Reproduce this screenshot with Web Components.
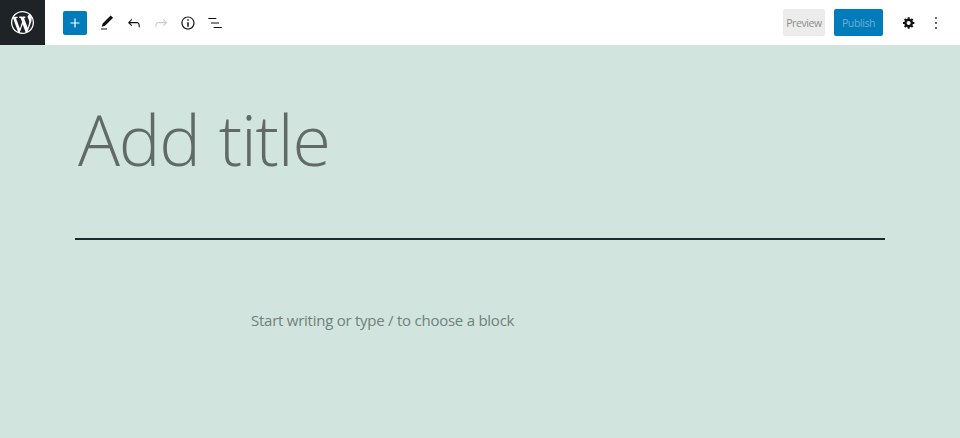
<!DOCTYPE html>
<html lang="en">
<head>
<meta charset="utf-8">
<title>Add title</title>
<style>
  html, body { margin: 0; height: 100%; background: #d1e5de; overflow: hidden; }
  body { font-family: "Open Sans", "Noto Sans", sans-serif; }
</style>
</head>
<body>
<wp-editor>
  <wp-topbar slot="bar"></wp-topbar>
  <wp-canvas title-text="Add title" placeholder="Start writing or type / to choose a block"></wp-canvas>
</wp-editor>

<script>
const ICONS = {
  plus: `<path d="M18 11.2h-5.2V6h-1.6v5.2H6v1.6h5.2V18h1.6v-5.2H18z"/>`,
  tools: `<path d="M20.1 5.1L16.9 2 6.2 12.7l-1.3 4.4 4.5-1.3L20.1 5.1zM4 20.8h8v-1.5H4v1.5z"/>`,
  undo: `<path d="M18.3 11.7c-.6-.6-1.4-.9-2.3-.9H6.7l2.9-3.3-1.1-1-4.5 5L8.5 16l1-1-2.7-2.7H16c.5 0 .9.2 1.3.5 1 1 1 3.4 1 4.5v.3h1.5v-.2c0-1.5 0-4.3-1.5-5.7z"/>`,
  redo: `<path d="M15.6 6.5l-1.1 1 2.9 3.3H8c-.9 0-1.7.3-2.3.9-1.4 1.5-1.4 4.2-1.4 5.6v.2h1.5v-.3c0-1.1 0-3.5 1-4.5.3-.3.7-.5 1.3-.5h9.2L14.5 15l1.1 1.1 4.6-4.6-4.6-5z"/>`,
  info: `<path d="M12 3.2c-4.8 0-8.8 3.9-8.8 8.8 0 4.8 3.9 8.8 8.8 8.8 4.8 0 8.8-3.9 8.8-8.8 0-4.8-4-8.8-8.8-8.8zm0 16c-4 0-7.2-3.3-7.2-7.2C4.8 8 8 4.8 12 4.8s7.2 3.3 7.2 7.2c0 4-3.2 7.2-7.2 7.2zM11 17h2v-6h-2v6zm0-8h2V7h-2v2z"/>`,
  list: `<path d="M13.8 5.2H3v1.5h10.8V5.2zm-3.6 12v1.5H21v-1.5H10.2zm7.2-6H6.6v1.5h10.8v-1.5z"/>`,
  cog: `<path transform="translate(2 1.5)" d="M18 12h-2.18c-.17.7-.44 1.35-.81 1.93l1.54 1.54-2.1 2.1-1.54-1.54c-.58.36-1.23.63-1.91.79V19H8v-2.18c-.68-.16-1.33-.43-1.91-.79l-1.54 1.54-2.12-2.12 1.54-1.54c-.36-.58-.63-1.23-.79-1.91H1V9.03h2.17c.16-.7.44-1.35.8-1.94L2.43 5.55l2.1-2.1 1.54 1.54c.58-.37 1.24-.64 1.93-.81V2h3v2.18c.68.16 1.33.43 1.91.79l1.54-1.54 2.12 2.12-1.54 1.54c.36.59.64 1.24.8 1.94H18V12zm-8.5 1.5c1.66 0 3-1.34 3-3s-1.34-3-3-3-3 1.34-3 3 1.34 3 3 3z"/>`,
  more: `<path d="M13 19h-2v-2h2v2zm0-6h-2v-2h2v2zm0-6h-2V5h2v2z"/>`
};

class WpEditor extends HTMLElement {
  constructor() {
    super();
    this.attachShadow({ mode: "open" }).innerHTML = `
      <style>
        :host { display: flex; flex-direction: column; width: 960px; height: 438px; }
      </style>
      <slot name="bar"></slot>
      <slot></slot>`;
  }
}

class WpIcon extends HTMLElement {
  connectedCallback() {
    const name = this.getAttribute("name");
    const size = this.getAttribute("size") || 18;
    this.shadowRoot || this.attachShadow({ mode: "open" });
    this.shadowRoot.innerHTML = `
      <style>
        :host { display: flex; align-items: center; justify-content: center; width: 24px; height: 24px; flex: none; color: #111; }
        :host([disabled]) { color: #c9cdd0; }
        :host([primary]) { color: #fff; background: #007cba; border-radius: 2px; }
        svg { display: block; fill: currentColor; }
      </style>
      <svg width="${size}" height="${size}" viewBox="0 0 24 24" aria-hidden="true">${ICONS[name]}</svg>`;
  }
}

class WpButton extends HTMLElement {
  constructor() {
    super();
    this.attachShadow({ mode: "open" }).innerHTML = `
      <style>
        :host { display: flex; align-items: center; justify-content: center; width: 42px; height: 27px; border-radius: 2px; font-size: 10.5px; letter-spacing: -.4px; flex: none; background: #ececec; color: #8c8c8c; }
        :host([primary]) { width: 49px; background: #007cba; color: #72aed0; }
      </style>
      <slot></slot>`;
  }
}

class WpTopbar extends HTMLElement {
  constructor() {
    super();
    this.attachShadow({ mode: "open" }).innerHTML = `
      <style>
        :host { display: flex; align-items: center; height: 45px; flex: none; background: #fff; }
        .logo { width: 45px; height: 45px; background: #1e2327; display: flex; align-items: center; justify-content: center; flex: none; }
        .logo svg { display: block; fill: #fff; }
        .tools { display: flex; align-items: center; gap: 3px; margin-left: 18px; }
        .tools wp-icon[primary] { margin-right: 5px; }
        .actions { display: flex; align-items: center; margin-left: auto; }
        wp-button[primary] { margin-left: 9px; }
        .cog { margin-left: 14px; }
        .more { margin-left: 2.5px; margin-right: 12.5px; }
      </style>
      <div class="logo">
        <svg width="23" height="23" viewBox="0 0 20 20" aria-hidden="true"><path d="M20 10c0-5.51-4.49-10-10-10C4.48 0 0 4.49 0 10c0 5.52 4.48 10 10 10 5.51 0 10-4.48 10-10zM7.78 15.37L4.37 6.22c.55-.02 1.17-.08 1.17-.08.5-.06.44-1.13-.06-1.11 0 0-1.45.11-2.37.11-.18 0-.37 0-.58-.01C4.12 2.69 6.87 1.11 10 1.11c2.33 0 4.45.87 6.05 2.34-.68-.11-1.65.39-1.65 1.58 0 .74.45 1.36.9 2.1.35.61.55 1.36.55 2.46 0 1.49-1.4 5-1.4 5l-3.03-8.37c.54-.02.82-.17.82-.17.5-.05.44-1.25-.06-1.22 0 0-1.44.12-2.38.12-.87 0-2.33-.12-2.33-.12-.5-.03-.56 1.2-.06 1.22l.92.08 1.26 3.41zM17.41 10c.24-.64.74-1.87.43-4.25.7 1.29 1.05 2.71 1.05 4.25 0 3.29-1.73 6.24-4.4 7.78.97-2.59 1.94-5.2 2.92-7.78zM6.1 18.09C3.12 16.65 1.11 13.53 1.11 10c0-1.3.23-2.48.72-3.59C3.25 10.3 4.67 14.2 6.1 18.09zm4.03-6.63l2.58 6.98c-.86.29-1.76.45-2.71.45-.79 0-1.57-.11-2.29-.33.81-2.38 1.62-4.74 2.42-7.1z"/></svg>
      </div>
      <div class="tools">
        <wp-icon name="plus" primary></wp-icon>
        <wp-icon name="tools"></wp-icon>
        <wp-icon name="undo"></wp-icon>
        <wp-icon name="redo" disabled></wp-icon>
        <wp-icon name="info"></wp-icon>
        <wp-icon name="list"></wp-icon>
      </div>
      <div class="actions">
        <wp-button>Preview</wp-button>
        <wp-button primary>Publish</wp-button>
        <wp-icon class="cog" name="cog" size="16"></wp-icon>
        <wp-icon class="more" name="more" size="20"></wp-icon>
      </div>`;
  }
}

class WpCanvas extends HTMLElement {
  connectedCallback() {
    this.shadowRoot || this.attachShadow({ mode: "open" });
    this.shadowRoot.innerHTML = `
      <style>
        :host { display: block; flex: 1; background: #d1e5de; padding: 0 75px; font-family: "Open Sans", "Noto Sans", sans-serif; }
        h1 { margin: 0; padding: 45px 0 0 3px; height: 143px; box-sizing: border-box; font-size: 70px; line-height: 98px; font-weight: 300; letter-spacing: -1.2px; word-spacing: 2px; color: #626a67; white-space: nowrap; }
        hr { margin: 50px 0 0; border: 0; height: 2px; background: #1b2a2a; }
        p { margin: 69px 0 0 176px; font-size: 15px; line-height: 22px; letter-spacing: -.25px; color: #71807f; white-space: nowrap; }
      </style>
      <h1>${this.getAttribute("title-text")}</h1>
      <hr>
      <p>${this.getAttribute("placeholder")}</p>`;
  }
}

customElements.define("wp-icon", WpIcon);
customElements.define("wp-button", WpButton);
customElements.define("wp-topbar", WpTopbar);
customElements.define("wp-canvas", WpCanvas);
customElements.define("wp-editor", WpEditor);
</script>
</body>
</html>
